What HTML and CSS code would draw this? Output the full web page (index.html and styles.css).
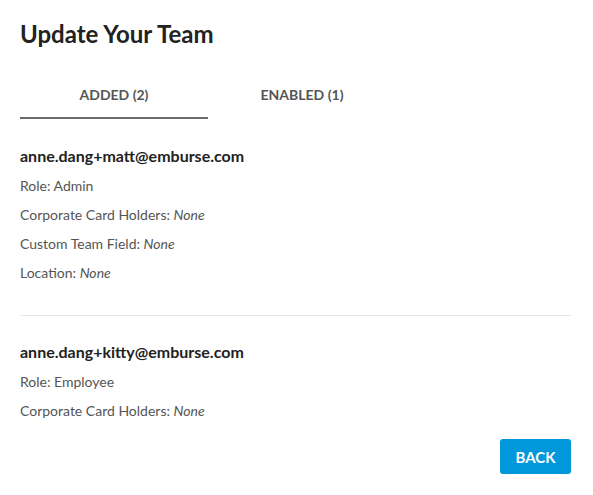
FILE: index.html
```html
<!DOCTYPE html>
<html lang="en">
<head>
  <meta charset="UTF-8">
  <title>Update Your Team</title>
  <link rel="stylesheet" href="styles.css">
</head>
<body>

<div class="modal">
  <h1 class="title">Update Your Team</h1>

  <div class="tabs">
    <div class="tab active">ADDED (2)</div>
    <div class="tab">ENABLED (1)</div>
  </div>

  <div class="member">
    <div class="email">anne.dang+matt@emburse.com</div>
    <div class="field">Role: Admin</div>
    <div class="field">Corporate Card Holders: <em>None</em></div>
    <div class="field">Custom Team Field: <em>None</em></div>
    <div class="field">Location: <em>None</em></div>
  </div>

  <div class="member">
    <div class="email">anne.dang+kitty@emburse.com</div>
    <div class="field">Role: Employee</div>
    <div class="field">Corporate Card Holders: <em>None</em></div>
  </div>

  <div class="actions">
    <button class="btn-back">BACK</button>
  </div>
</div>

</body>
</html>
```

FILE: styles.css
```css
body {
  margin: 0;
  font-family: Lato, "Open Sans", sans-serif;
  background: #fff;
  color: #555;
}

.modal {
  width: 593px;
  height: 495px;
  box-sizing: border-box;
  padding: 19px 22px 0 20px;
  overflow: hidden;
}

.title {
  margin: 0;
  font-size: 24px;
  font-weight: 700;
  color: #222;
  line-height: 30px;
}

.tabs {
  display: flex;
  margin-top: 31px;
}

.tab {
  width: 188px;
  text-align: center;
  font-size: 14px;
  font-weight: 700;
  color: #555;
  line-height: 18px;
  padding: 6px 0 13px;
  border-bottom: 2px solid transparent;
}

.tab.active {
  border-bottom-color: #6b6b6b;
}

.member {
  padding: 27px 0 28px;
}

.member + .member {
  border-top: 1px solid #e3e6ea;
  padding-top: 26px;
  padding-bottom: 14px;
}

.email {
  font-size: 16px;
  font-weight: 700;
  color: #222;
  line-height: 20px;
  margin-bottom: 5px;
}

.field {
  font-size: 14px;
  line-height: 29px;
}

.field em {
  font-style: italic;
}

.actions {
  display: flex;
  justify-content: flex-end;
}

.btn-back {
  width: 71px;
  height: 35px;
  border: none;
  border-radius: 3px;
  background: #0098db;
  color: #fff;
  font-family: inherit;
  font-size: 15px;
  font-weight: 700;
  cursor: pointer;
}
```
